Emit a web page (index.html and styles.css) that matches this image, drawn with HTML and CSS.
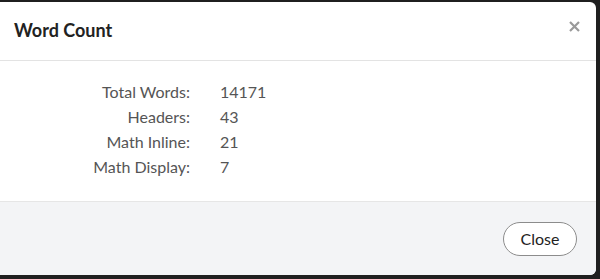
FILE: index.html
```html
<!DOCTYPE html>
<html>
<head>
<meta charset="utf-8">
<link rel="stylesheet" href="styles.css">
</head>
<body>
<div class="modal">
  <div class="modal-header">
    <h3 class="modal-title">Word Count</h3>
    <button class="close-x" aria-label="Close">
      <svg width="11" height="11" viewBox="0 0 11 11"><path d="M1 1 L10 10 M10 1 L1 10" stroke="#9a9a9a" stroke-width="2.2" stroke-linecap="butt"/></svg>
    </button>
  </div>
  <div class="modal-body">
    <div class="stats">
      <div class="label">Total Words:</div><div class="value">14171</div>
      <div class="label">Headers:</div><div class="value">43</div>
      <div class="label">Math Inline:</div><div class="value">21</div>
      <div class="label">Math Display:</div><div class="value">7</div>
    </div>
  </div>
  <div class="modal-footer">
    <button class="btn-close">Close</button>
  </div>
</div>
</body>
</html>
```
FILE: styles.css
```css
html, body {
  margin: 0;
  height: 100%;
}
body {
  background: #1f1f1f;
  padding: 2px 4px 4px 0;
  box-sizing: border-box;
  font-family: Lato, "Open Sans", sans-serif;
}
.modal {
  background: #fff;
  height: 273px;
  border-radius: 0 6px 6px 0;
  display: flex;
  flex-direction: column;
  overflow: hidden;
}
.modal-header {
  height: 58px;
  border-bottom: 1px solid #e3e3e3;
  display: flex;
  align-items: center;
  justify-content: space-between;
  padding: 0 16px 0 14px;
  box-sizing: content-box;
}
.modal-title {
  margin: 0;
  font-size: 18px;
  font-weight: 700;
  color: #222;
  padding-bottom: 3px;
}
.close-x {
  background: none;
  border: 0;
  padding: 0;
  width: 11px;
  height: 11px;
  display: flex;
  margin-top: -10px;
}
.modal-body {
  height: 140px;
  padding-top: 18px;
  box-sizing: border-box;
}
.stats {
  display: grid;
  grid-template-columns: 190px auto;
  column-gap: 30px;
  font-size: 16px;
  line-height: 25px;
  color: #555;
}
.label {
  text-align: right;
}
.modal-footer {
  flex: 1;
  background: #f3f4f6;
  border-top: 1px solid #e6e6e6;
  display: flex;
  align-items: center;
  justify-content: flex-end;
  padding-right: 19px;
}
.btn-close {
  font-family: Lato, "Open Sans", sans-serif;
  font-size: 16px;
  color: #222;
  background: #fff;
  border: 1px solid #8c8c8c;
  border-radius: 17px;
  width: 74px;
  height: 34px;
  padding: 0;
}
```
